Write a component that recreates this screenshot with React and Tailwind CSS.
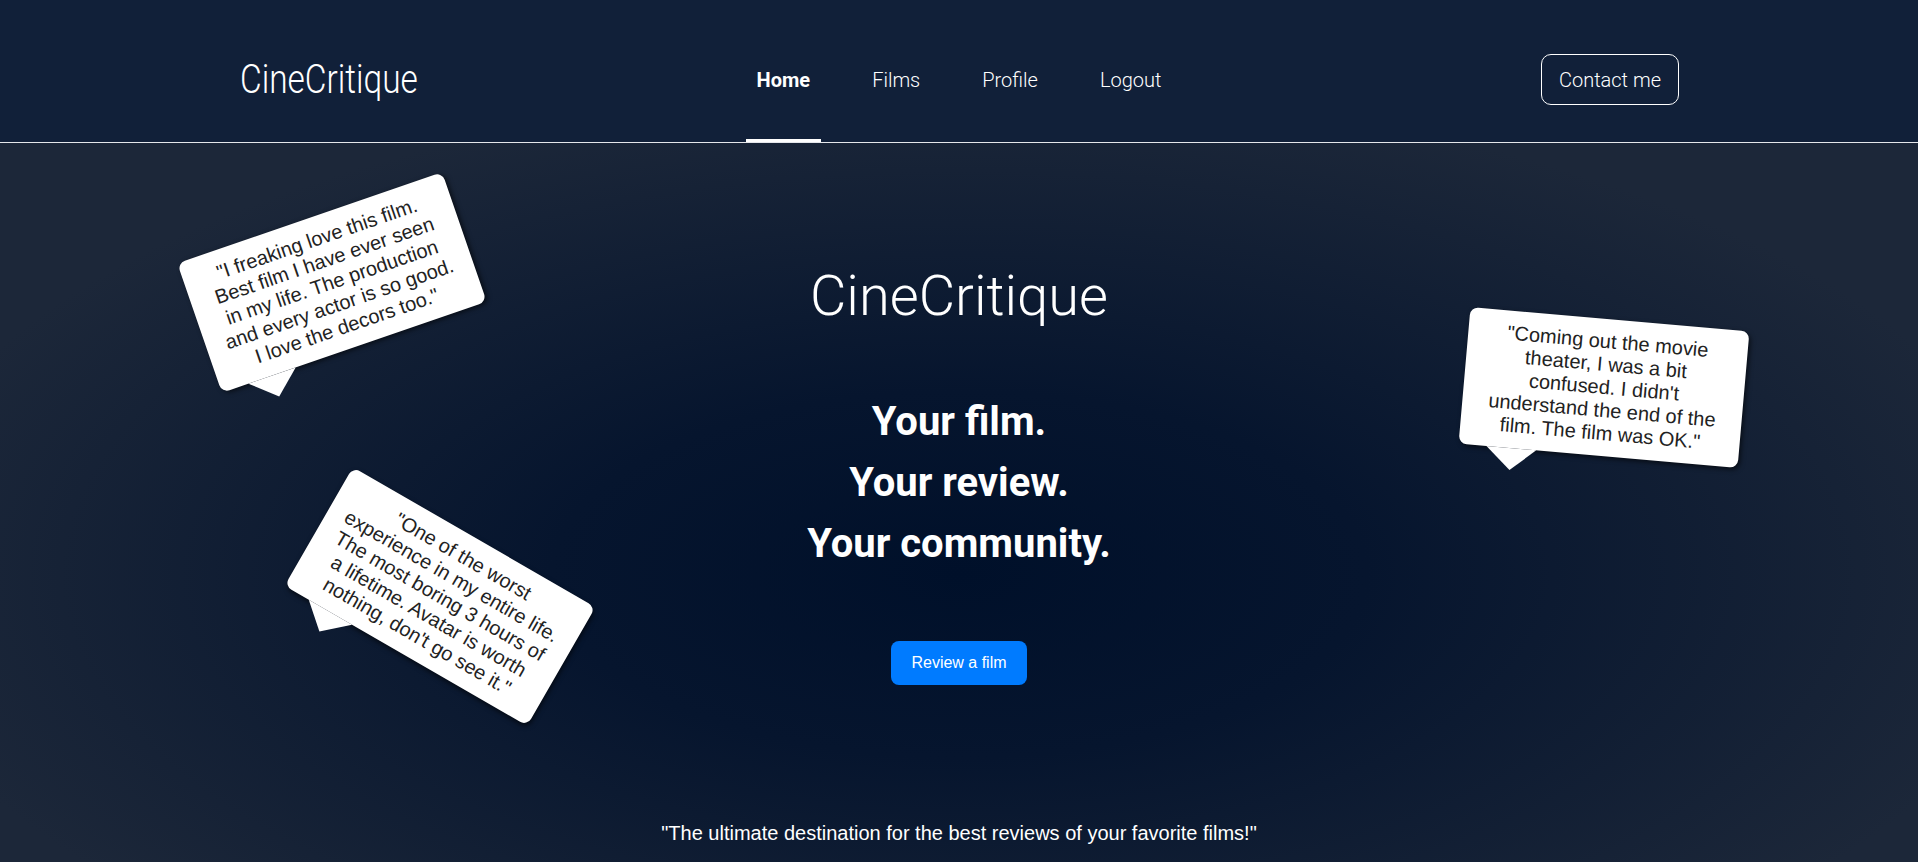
import React from 'react'

const reviews = [
  {
    text: '"I freaking love this film. Best film I have ever seen in my life. The production and every actor is so good. I love the decors too."',
    pos: 'left-[192px] top-[71px] -rotate-[19deg]',
  },
  {
    text: '"One of the worst experience in my entire life. The most boring 3 hours of a lifetime. Avatar is worth nothing, don\'t go see it."',
    pos: 'left-[300px] top-[385px] rotate-[30deg]',
  },
  {
    text: '"Coming out the movie theater, I was a bit confused. I didn\'t understand the end of the film. The film was OK."',
    pos: 'left-[1464px] top-[176px] rotate-[5deg]',
  },
]

function Bubble({ text, pos }) {
  return (
    <div
      className={`absolute w-[280px] ${pos} bg-white rounded-[8px] px-[15px] py-[11px] text-center text-[20px] leading-[23px] text-[#222] font-['Liberation_Sans',Arial,sans-serif] shadow-[2px_2px_5px_rgba(0,0,0,0.6)]`}
    >
      {text}
      {/* tail */}
      <span className="absolute left-[28px] top-full w-0 h-0 border-l-[25px] border-r-[25px] border-t-[22px] border-l-transparent border-r-transparent border-t-white" />
    </div>
  )
}

export default function App() {
  const links = ['Home', 'Films', 'Profile', 'Logout']

  return (
    <div className="min-h-screen bg-[#1b2538] text-white font-['Roboto',sans-serif]">
      {/* Header */}
      <header className="h-[143px] bg-[#112039] border-b border-[#e5e7eb]">
        <div className="max-w-[1440px] mx-auto h-full pt-[17px] grid grid-cols-3 items-center">
          <a className="justify-self-start inline-block ml-px origin-left scale-x-[0.835] text-[40px] font-light leading-none whitespace-nowrap">
            CineCritique
          </a>
          <nav className="justify-self-center h-full flex gap-10">
            {links.map((l, i) => (
              <a
                key={l}
                className={
                  i === 0
                    ? 'h-full flex items-center px-[11px] pt-[3px] text-[20px] font-bold border-b-[3px] border-white'
                    : 'h-full flex items-center px-[11px] text-[20px] font-light'
                }
              >
                {l}
              </a>
            ))}
          </nav>
          <button className="justify-self-end h-[51px] px-[17px] border border-white rounded-[10px] text-[20px] font-light">
            Contact me
          </button>
        </div>
      </header>

      {/* Hero */}
      <main className="relative overflow-hidden h-[719px] flex flex-col items-center pt-[120px] bg-[radial-gradient(ellipse_at_50%_60%,#00102a_0%,#06152e_30%,#1c2739_80%)]">
        {reviews.map((r, i) => (
          <Bubble key={i} {...r} />
        ))}

        <h1 className="text-[56px] font-light leading-[67px]">CineCritique</h1>
        <h2 className="mt-[61px] text-[40px] font-bold leading-[61px] text-center">
          Your film.
          <br />
          Your review.
          <br />
          Your community.
        </h2>
        <button className="mt-[67px] h-[44px] px-5 rounded-[8px] bg-[#007bff] text-[16px] font-['Liberation_Sans',Arial,sans-serif]">
          Review a film
        </button>
        <p className="mt-[133px] text-[20px] leading-[30px] font-['Liberation_Sans',Arial,sans-serif]">
          "The ultimate destination for the best reviews of your favorite films!"
        </p>
      </main>
    </div>
  )
}
